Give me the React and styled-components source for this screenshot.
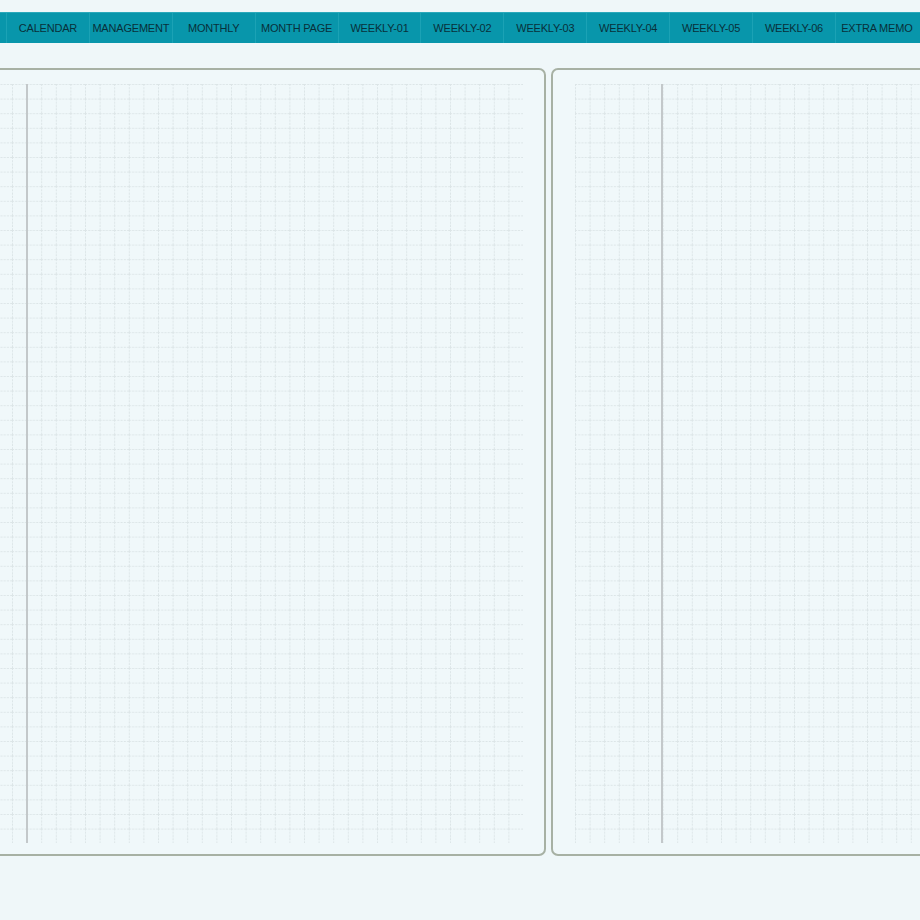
import styled, { createGlobalStyle } from 'styled-components';

const GlobalStyle = createGlobalStyle`
  html, body {
    margin: 0;
    padding: 0;
    background: #eff7f9;
  }
  body {
    font-family: "Liberation Sans", Arial, sans-serif;
  }
`;

const Screen = styled.div`
  width: 920px;
  height: 920px;
  overflow: hidden;
  background: #eff7f9;
  padding-top: 12px;
  box-sizing: border-box;
`;

const TabBar = styled.nav`
  display: flex;
  height: 31px;
  padding-left: 6px;
  background: #0896ab;
  border-top: 1px solid #2aa9bb;
  box-sizing: border-box;
  overflow: hidden;
`;

const Tab = styled.div`
  flex: 0 0 82.9px;
  display: flex;
  align-items: center;
  justify-content: center;
  border-left: 1px solid #1ba2b5;
  box-sizing: border-box;
  font-size: 11px;
  letter-spacing: -0.2px;
  color: #08303a;
  white-space: nowrap;
`;

const Spread = styled.div`
  display: flex;
  gap: 5px;
  margin-left: -85px;
  padding-top: 25px;
`;

const Page = styled.div`
  flex: 0 0 630px;
  height: 788px;
  box-sizing: border-box;
  border: 2px solid #a7b1a4;
  border-radius: 7px;
  background: #f0f8fa;
  padding: 14px 21px 12px 22px;
`;

const Sheet = styled.div`
  position: relative;
  width: 584px;
  height: 759px;
`;

const MarginLine = styled.div`
  position: absolute;
  top: 0;
  bottom: 0;
  left: ${(p) => p.$left}px;
  width: 2px;
  background: #c3c8ca;
`;

const CELL = 14.6;

const GridPaper = ({ id }) => (
  <svg width="584" height="759" style={{ display: 'block' }}>
    <defs>
      <pattern id={id} width={CELL} height={CELL} patternUnits="userSpaceOnUse">
        <line x1="0.5" y1="0" x2="0.5" y2={CELL} stroke="#dce5e7" strokeWidth="1" strokeDasharray="2 1.2" />
        <line x1="0" y1="0.5" x2={CELL} y2="0.5" stroke="#dce5e7" strokeWidth="1" strokeDasharray="2 1.2" />
      </pattern>
    </defs>
    <rect width="584" height="759" fill={`url(#${id})`} />
  </svg>
);

const tabs = [
  'CALENDAR',
  'MANAGEMENT',
  'MONTHLY',
  'MONTH PAGE',
  'WEEKLY-01',
  'WEEKLY-02',
  'WEEKLY-03',
  'WEEKLY-04',
  'WEEKLY-05',
  'WEEKLY-06',
  'EXTRA MEMO',
];

export default function App() {
  return (
    <>
      <GlobalStyle />
      <Screen>
        <TabBar>
          {tabs.map((t) => (
            <Tab key={t}>{t}</Tab>
          ))}
        </TabBar>
        <Spread>
          <Page>
            <Sheet>
              <GridPaper id="gridLeft" />
              <MarginLine $left={87} />
            </Sheet>
          </Page>
          <Page>
            <Sheet>
              <GridPaper id="gridRight" />
              <MarginLine $left={86} />
            </Sheet>
          </Page>
        </Spread>
      </Screen>
    </>
  );
}
